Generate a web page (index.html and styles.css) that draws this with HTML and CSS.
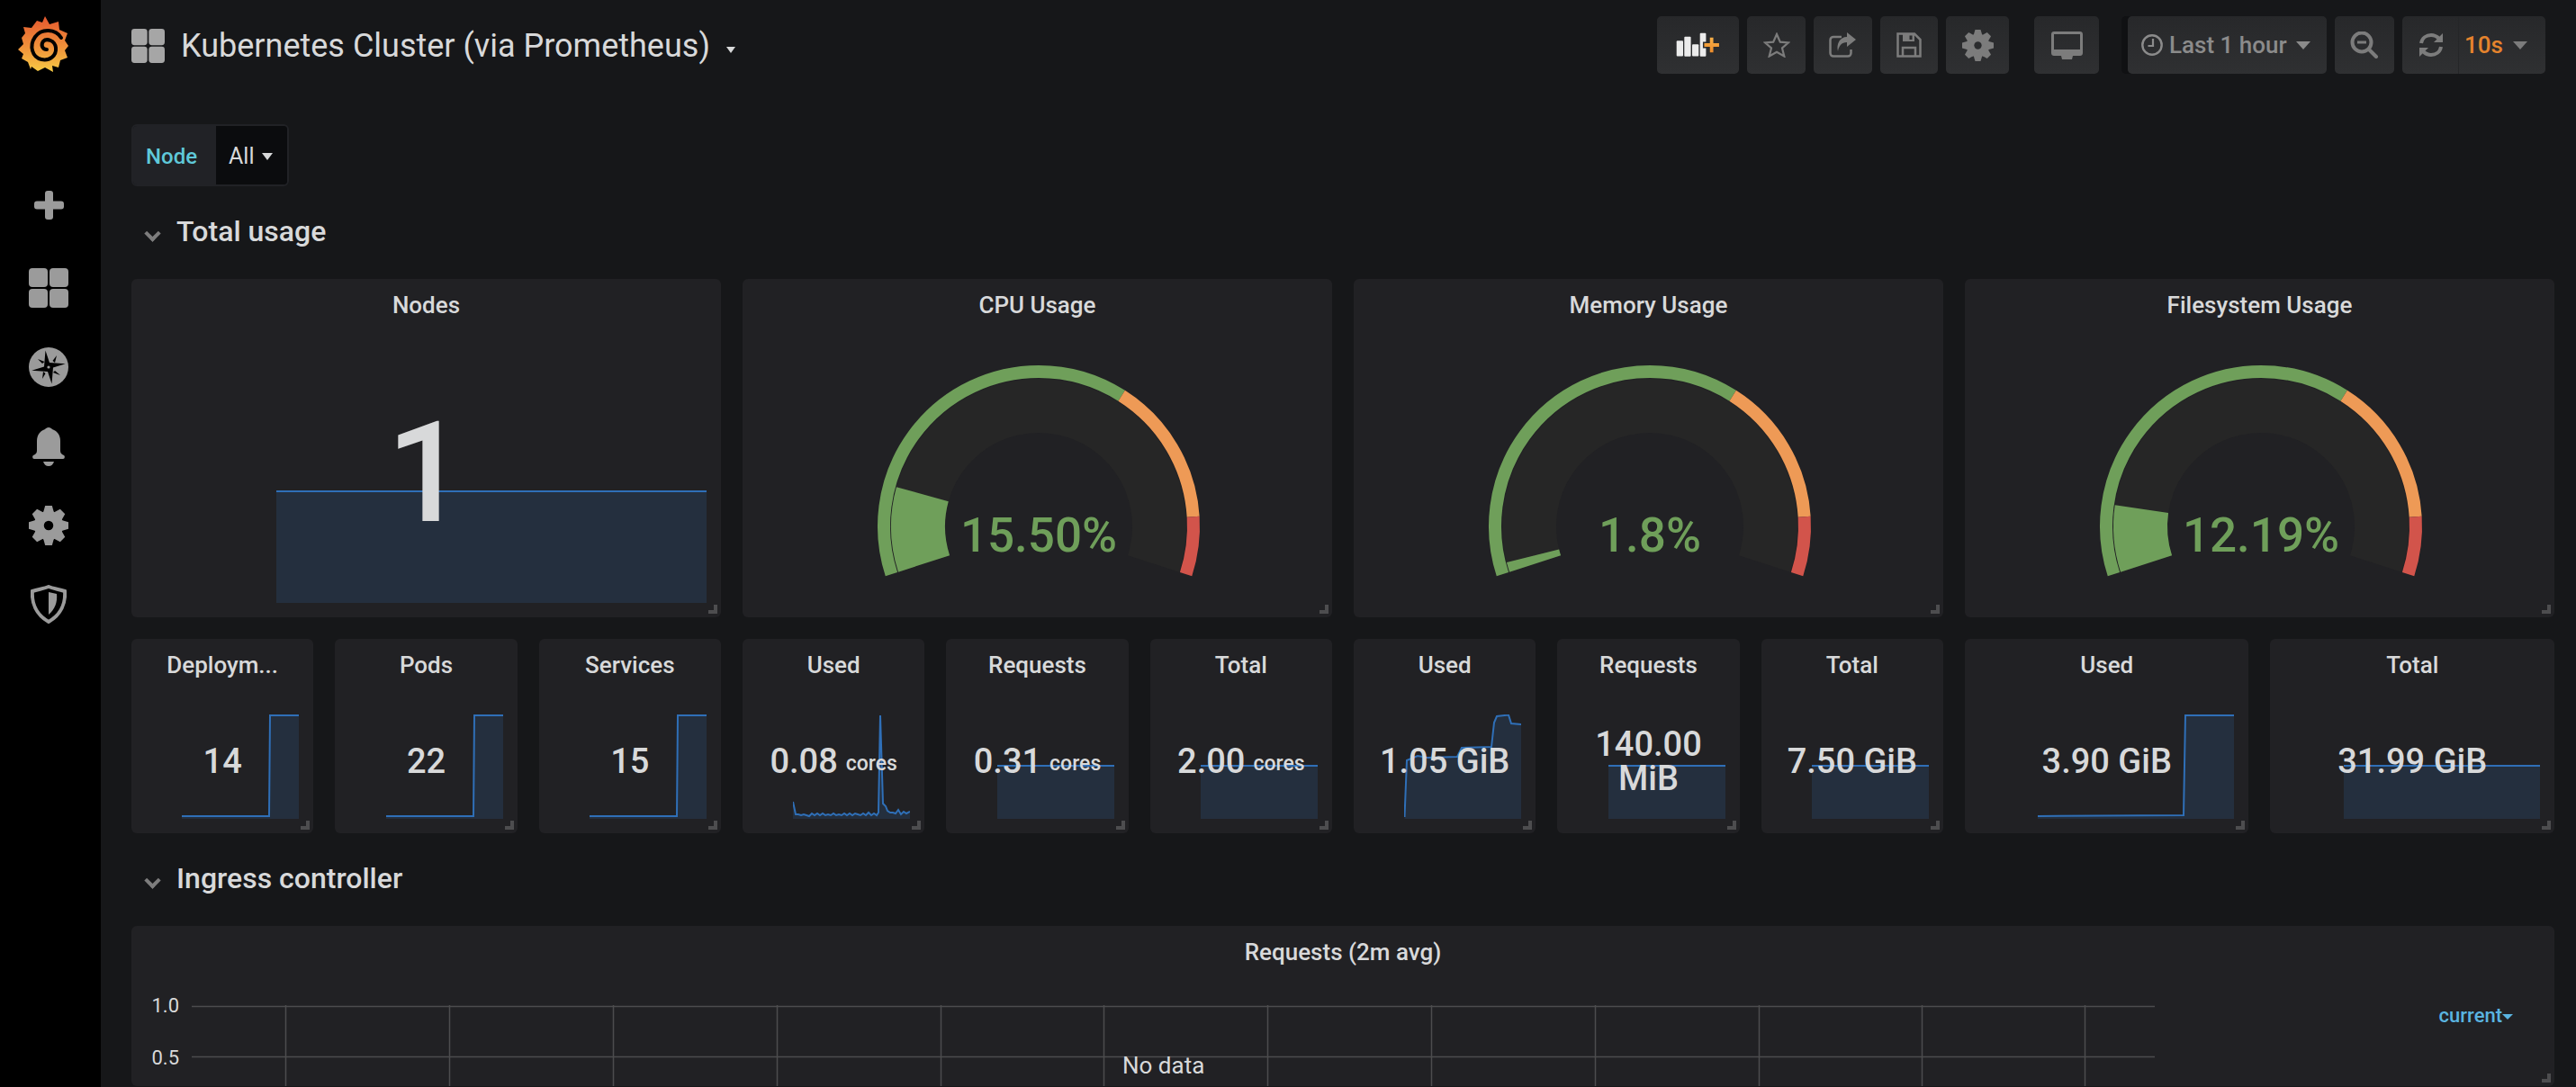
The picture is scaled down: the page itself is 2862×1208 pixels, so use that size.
FILE: index.html
```html
<!DOCTYPE html>
<html lang="en">
<head>
  <meta charset="UTF-8">
  <title>Kubernetes Cluster (via Prometheus) - Grafana</title>
  <link rel="stylesheet" href="styles.css">
</head>
<body>

  <!-- shared icon shapes -->
  <svg class="defs" width="0" height="0">
    <defs>
      <mask id="gear-hole">
        <rect x="-24" y="-24" width="48" height="48" fill="#fff"/>
        <circle r="5.5" fill="#000"/>
      </mask>
      <symbol id="gear" viewBox="-23 -23 46 46">
        <g mask="url(#gear-hole)">
          <circle r="17"/>
          <polygon points="-6,-16 -4,-23 4,-23 6,-16 6,16 4,23 -4,23 -6,16"/>
          <polygon points="-6,-16 -4,-23 4,-23 6,-16 6,16 4,23 -4,23 -6,16" transform="rotate(45)"/>
          <polygon points="-6,-16 -4,-23 4,-23 6,-16 6,16 4,23 -4,23 -6,16" transform="rotate(90)"/>
          <polygon points="-6,-16 -4,-23 4,-23 6,-16 6,16 4,23 -4,23 -6,16" transform="rotate(135)"/>
        </g>
      </symbol>
      <symbol id="tiles" viewBox="0 0 44 44">
        <rect x="0" y="0" width="21" height="21" rx="4"/>
        <rect x="23" y="0" width="21" height="21" rx="4"/>
        <rect x="0" y="23" width="21" height="21" rx="4"/>
        <rect x="23" y="23" width="21" height="21" rx="4"/>
      </symbol>
      <linearGradient id="logo-fill" x1="0" y1="0" x2="0" y2="1">
        <stop offset="0" stop-color="#e4572f"/>
        <stop offset="0.55" stop-color="#f0913a"/>
        <stop offset="1" stop-color="#f7cb45"/>
      </linearGradient>
      <linearGradient id="plus-fill" x1="0" y1="0" x2="0" y2="1">
        <stop offset="0" stop-color="#f8b24a"/>
        <stop offset="1" stop-color="#ec8a2a"/>
      </linearGradient>
    </defs>
  </svg>

  <nav class="sidebar">
    <svg class="logo" viewBox="0 0 56 62" width="56" height="62">
      <path fill="url(#logo-fill)" d="M30 0 L35 9 L45 6 L46 15 L55 19 L52 27 L56 33 L52 38 L55 46 L47 49 L45 57 L38 55 L39 62 L30 57 L22 61 L15 56 L14 59 L11 51 L4 47 L6 42 L0 37 L6 31 L4 24 L8 19 L6 12 L15 13 L21 5 L27 7 Z"/>
      <path fill="none" stroke="#000" stroke-width="4" stroke-linecap="round" d="M48 24 C42 14 26 13 19 23 C12 33 16 46 26 48 C35 50 43 44 42 35 C41 27 32 24 28 28 C25 32 27 37 32 37"/>
    </svg>
    <a class="side-item side-add">
      <svg viewBox="0 0 33 32" width="33" height="32"><rect x="12" y="0" width="9" height="32" rx="3"/><rect x="0" y="11.5" width="33" height="9" rx="3"/></svg>
    </a>
    <a class="side-item side-first">
      <svg width="44" height="44"><use href="#tiles"/></svg>
    </a>
    <a class="side-item">
      <svg viewBox="-22 -22 44 44" width="44" height="44">
        <circle r="22"/>
        <polygon class="cut" points="-3.5,-18.5 1,-5 18.7,-3.7 5,0.5 3.5,18.5 -1,5 -18.7,3.7 -5,-0.5"/>
        <polygon class="cut" points="-12,-9 -4.5,-6 -7,-4"/>
        <polygon class="cut" points="9,-13 7,-5 4.5,-7"/>
        <polygon class="cut" points="13,9 5,6 7,4"/>
        <polygon class="cut" points="-7,13 -6,5 -3.5,7"/>
        <circle r="1.6"/>
      </svg>
    </a>
    <a class="side-item">
      <svg viewBox="0 0 36 43" width="36" height="43">
        <path d="M18 0 C20 0 21 1 22 2 C28 4 31 9 31 15 V26 C31 29 33 30 35 31 C36.500 32 36 35 34 35 H2 C0 35 -.5 32 1 31 C3 30 5 29 5 26 V15 C5 9 8 4 14 2 C15 1 16 0 18 0 Z"/>
        <path d="M12 38 H24 C23 41 21 43 18 43 C15 43 13 41 12 38 Z"/>
      </svg>
    </a>
    <a class="side-item">
      <svg width="44" height="44"><use href="#gear"/></svg>
    </a>
    <a class="side-item">
      <svg viewBox="0 0 40 44" width="40" height="44">
        <path class="line" stroke-width="4" d="M20 2 C25 4 32 5 38 7 C39 20 34 33 20 41 C6 33 1 20 2 7 C8 5 15 4 20 2 Z"/>
        <path d="M20 8 L29 10 C30 19 27 27 20 33 Z"/>
      </svg>
    </a>
  </nav>

  <div class="main">
    <header class="topbar">
      <div class="dash-title">
        <svg class="title-icon" width="37" height="38" preserveAspectRatio="none" viewBox="0 0 44 44"><use href="#tiles" width="44" height="44"/></svg>
        <h1>Kubernetes Cluster (via Prometheus)</h1>
        <span class="caret caret-small"></span>
      </div>
      <div class="actions">
        <button class="btn btn-add">
          <svg viewBox="0 0 50 28" width="50" height="28">
            <rect class="bar" x="0.700" y="9.300" width="7.300" height="17.300" rx="1"/>
            <rect class="bar" x="9.300" y="4.700" width="7.300" height="22" rx="1"/>
            <rect class="bar" x="18" y="13.300" width="7.300" height="13.300" rx="1"/>
            <rect class="bar" x="26.700" y="0.700" width="6.700" height="26" rx="1"/>
            <path class="plus" d="M37 5 H42.300 V11.300 H48.700 V16.700 H42.300 V23 H37 V16.700 H30.700 V11.300 H37 Z"/>
          </svg>
        </button>
        <button class="btn btn-star">
          <svg viewBox="0 0 30 28" width="30" height="28"><polygon class="line" stroke-width="2.200" points="15,2 18.800,10.700 28,11.400 21,17.500 23.300,26.500 15,21.700 6.700,26.500 9,17.500 2,11.400 11.200,10.700"/></svg>
        </button>
        <button class="btn btn-star">
          <svg viewBox="0 0 31 28" width="31" height="28">
            <path class="line" stroke-width="2.500" d="M14 5 H5 C3 5 1.500 6.500 1.500 8.500 V23 C1.500 25 3 26.500 5 26.500 H21 C23 26.500 24.500 25 24.500 23 V19"/>
            <path d="M20 0 L30 8 L20 16 V11 C14 11 11 15 10 21 C8 13 12 5 20 5 Z"/>
          </svg>
        </button>
        <button class="btn btn-save">
          <svg viewBox="0 0 28 28" width="28" height="28">
            <path class="line" stroke-width="2.500" d="M1.500 1.500 H20 L26.500 8 V26.500 H1.500 Z"/>
            <path class="line" stroke-width="2.500" d="M7 26 V17 H21 V26"/>
            <path d="M7 1.500 H20 V10 H7 Z M14.500 3.500 V8 H17.500 V3.500 Z" fill-rule="evenodd"/>
          </svg>
        </button>
        <button class="btn btn-gear">
          <svg width="35" height="35"><use href="#gear"/></svg>
        </button>
        <button class="btn btn-view">
          <svg viewBox="0 0 35 31" width="35" height="31">
            <path fill-rule="evenodd" d="M3 0 H32 C33.700 0 35 1.300 35 3 V24 C35 25.700 33.700 27 32 27 H3 C1.300 27 0 25.700 0 24 V3 C0 1.300 1.300 0 3 0 Z M3 3 V20 H32 V3 Z"/>
            <polygon points="11,27 24,27 23,31 12,31"/>
          </svg>
        </button>
        <button class="btn btn-time">
          <svg viewBox="0 0 24 24" width="24" height="24">
            <circle class="line" cx="12" cy="12" r="10.700" stroke-width="2.400"/>
            <path class="line" stroke-width="2.200" d="M13 5 V13 H7.500"/>
          </svg>
          <span>Last 1 hour</span>
          <span class="caret"></span>
        </button>
        <button class="btn btn-zoom">
          <svg viewBox="0 0 32 30" width="32" height="30">
            <circle class="line" cx="13" cy="12" r="10.500" stroke-width="4"/>
            <rect x="8" y="10.500" width="10" height="3"/>
            <path class="line" stroke-width="4" stroke-linecap="round" d="M21 20 L29 28"/>
          </svg>
        </button>
        <div class="btn btn-refresh">
          <span class="refresh-icon">
            <svg viewBox="0 0 28 28" width="28" height="28">
              <path class="line" stroke-width="4" d="M3 12 C4 6 9 3 14 3 C18 3 21 5 23 7"/>
              <polygon points="27,1 27,11 17,11"/>
              <path class="line" stroke-width="4" d="M25 16 C24 22 19 25 14 25 C10 25 7 23 5 21"/>
              <polygon points="1,27 1,17 11,17"/>
            </svg>
          </span>
          <span class="refresh-rate">10s <span class="caret"></span></span>
        </div>
      </div>
    </header>

    <div class="variable">
      <span class="variable-label">Node</span>
      <span class="variable-value">All <span class="caret"></span></span>
    </div>

    <div class="row-title"><span class="chevron"></span>Total usage</div>

    <section class="panels">
      <article class="panel span-6">
        <h2>Nodes</h2>
        <div class="stat stat-huge">1</div>
        <svg class="spark spark-lg" viewBox="0 0 478 125">
          <path class="spark-fill" d="M0 1 H478 V125 H0 Z"/>
          <path class="spark-line" d="M0 1 H478"/>
        </svg>
      </article>

      <article class="panel span-6">
        <h2>CPU Usage</h2>
        <svg class="gauge" viewBox="-329 -217 656 318">
          <path class="gauge-bg" d="M-127.440 41.410 A134 134 0 1 1 127.440 41.410"/>
          <path class="gauge-value" pathLength="216" stroke-dasharray="33.480 216" d="M-127.440 41.410 A134 134 0 1 1 127.440 41.410"/>
          <path class="ring ring-ok" pathLength="216" stroke-dasharray="140.400 216" d="M-163.580 53.150 A172 172 0 1 1 163.580 53.150"/>
          <path class="ring ring-warn" pathLength="216" stroke-dasharray="0 140.400 54 216" d="M-163.580 53.150 A172 172 0 1 1 163.580 53.150"/>
          <path class="ring ring-crit" pathLength="216" stroke-dasharray="0 194.400 21.600 216" d="M-163.580 53.150 A172 172 0 1 1 163.580 53.150"/>
          <text class="gauge-text" x="0" y="28">15.50%</text>
        </svg>
      </article>

      <article class="panel span-6">
        <h2>Memory Usage</h2>
        <svg class="gauge" viewBox="-329 -217 656 318">
          <path class="gauge-bg" d="M-127.440 41.410 A134 134 0 1 1 127.440 41.410"/>
          <path class="gauge-value" pathLength="216" stroke-dasharray="3.890 216" d="M-127.440 41.410 A134 134 0 1 1 127.440 41.410"/>
          <path class="ring ring-ok" pathLength="216" stroke-dasharray="140.400 216" d="M-163.580 53.150 A172 172 0 1 1 163.580 53.150"/>
          <path class="ring ring-warn" pathLength="216" stroke-dasharray="0 140.400 54 216" d="M-163.580 53.150 A172 172 0 1 1 163.580 53.150"/>
          <path class="ring ring-crit" pathLength="216" stroke-dasharray="0 194.400 21.600 216" d="M-163.580 53.150 A172 172 0 1 1 163.580 53.150"/>
          <text class="gauge-text" x="0" y="28">1.8%</text>
        </svg>
      </article>

      <article class="panel span-6">
        <h2>Filesystem Usage</h2>
        <svg class="gauge" viewBox="-329 -217 656 318">
          <path class="gauge-bg" d="M-127.440 41.410 A134 134 0 1 1 127.440 41.410"/>
          <path class="gauge-value" pathLength="216" stroke-dasharray="26.330 216" d="M-127.440 41.410 A134 134 0 1 1 127.440 41.410"/>
          <path class="ring ring-ok" pathLength="216" stroke-dasharray="140.400 216" d="M-163.580 53.150 A172 172 0 1 1 163.580 53.150"/>
          <path class="ring ring-warn" pathLength="216" stroke-dasharray="0 140.400 54 216" d="M-163.580 53.150 A172 172 0 1 1 163.580 53.150"/>
          <path class="ring ring-crit" pathLength="216" stroke-dasharray="0 194.400 21.600 216" d="M-163.580 53.150 A172 172 0 1 1 163.580 53.150"/>
          <text class="gauge-text" x="0" y="28">12.19%</text>
        </svg>
      </article>

      <article class="panel span-2">
        <h2>Deploym...</h2>
        <div class="stat">14</div>
        <svg class="spark" viewBox="0 0 130 116">
          <path class="spark-fill" d="M0 113 H97 L98 1 H130 V116 H0 Z"/>
          <path class="spark-line" d="M0 113 H97 L98 1 H130"/>
        </svg>
      </article>

      <article class="panel span-2">
        <h2>Pods</h2>
        <div class="stat">22</div>
        <svg class="spark" viewBox="0 0 130 116">
          <path class="spark-fill" d="M0 113 H97 L98 1 H130 V116 H0 Z"/>
          <path class="spark-line" d="M0 113 H97 L98 1 H130"/>
        </svg>
      </article>

      <article class="panel span-2">
        <h2>Services</h2>
        <div class="stat">15</div>
        <svg class="spark" viewBox="0 0 130 116">
          <path class="spark-fill" d="M0 113 H97 L98 1 H130 V116 H0 Z"/>
          <path class="spark-line" d="M0 113 H97 L98 1 H130"/>
        </svg>
      </article>

      <article class="panel span-2">
        <h2>Used</h2>
        <div class="stat">0.08 <small>cores</small></div>
        <svg class="spark" viewBox="0 0 130 116">
          <path class="spark-fill" d="M0 97 L3 111 L6 111 L9 112 L12 111 L15 112 L18 113 L21 110 L24 112 L27 110 L30 112 L33 110 L36 112 L39 111 L42 112 L45 110 L48 112 L51 111 L54 112 L57 110 L60 112 L63 110 L66 112 L69 110 L72 111 L75 112 L78 110 L81 112 L84 109 L87 112 L90 110 L93 112 L95 109 L97 1 L100 99 L103 102 L105 107 L108 109 L111 109 L114 110 L117 106 L120 111 L123 108 L126 110 L130 108 V116 H0 Z"/>
          <path class="spark-line" d="M0 97 L3 111 L6 111 L9 112 L12 111 L15 112 L18 113 L21 110 L24 112 L27 110 L30 112 L33 110 L36 112 L39 111 L42 112 L45 110 L48 112 L51 111 L54 112 L57 110 L60 112 L63 110 L66 112 L69 110 L72 111 L75 112 L78 110 L81 112 L84 109 L87 112 L90 110 L93 112 L95 109 L97 1 L100 99 L103 102 L105 107 L108 109 L111 109 L114 110 L117 106 L120 111 L123 108 L126 110 L130 108"/>
        </svg>
      </article>

      <article class="panel span-2">
        <h2>Requests</h2>
        <div class="stat">0.31 <small>cores</small></div>
        <svg class="spark" viewBox="0 0 130 116">
          <path class="spark-fill" d="M0 57 H130 V116 H0 Z"/>
          <path class="spark-line" d="M0 57 H130"/>
        </svg>
      </article>

      <article class="panel span-2">
        <h2>Total</h2>
        <div class="stat">2.00 <small>cores</small></div>
        <svg class="spark" viewBox="0 0 130 116">
          <path class="spark-fill" d="M0 57 H130 V116 H0 Z"/>
          <path class="spark-line" d="M0 57 H130"/>
        </svg>
      </article>

      <article class="panel span-2">
        <h2>Used</h2>
        <div class="stat">1.05 GiB</div>
        <svg class="spark" viewBox="0 0 130 116">
          <path class="spark-fill" d="M0.500 114 L3 51 L15 46 L26 48 L59 47 L64 37 L97 36 L100 9 L103 2 L116 0.500 L119 10 L130 11 V116 H0.500 Z"/>
          <path class="spark-line" d="M0.500 114 L3 51 L15 46 L26 48 L59 47 L64 37 L97 36 L100 9 L103 2 L116 0.500 L119 10 L130 11"/>
        </svg>
      </article>

      <article class="panel span-2">
        <h2>Requests</h2>
        <div class="stat">140.00 MiB</div>
        <svg class="spark" viewBox="0 0 130 116">
          <path class="spark-fill" d="M0 57 H130 V116 H0 Z"/>
          <path class="spark-line" d="M0 57 H130"/>
        </svg>
      </article>

      <article class="panel span-2">
        <h2>Total</h2>
        <div class="stat">7.50 GiB</div>
        <svg class="spark" viewBox="0 0 130 116">
          <path class="spark-fill" d="M0 57 H130 V116 H0 Z"/>
          <path class="spark-line" d="M0 57 H130"/>
        </svg>
      </article>

      <article class="panel span-3">
        <h2>Used</h2>
        <div class="stat">3.90 GiB</div>
        <svg class="spark spark-wide" viewBox="0 0 218 116">
          <path class="spark-fill" d="M0 113 L162 112 L164 1 H218 V116 H0 Z"/>
          <path class="spark-line" d="M0 113 L162 112 L164 1 H218"/>
        </svg>
      </article>

      <article class="panel span-3">
        <h2>Total</h2>
        <div class="stat">31.99 GiB</div>
        <svg class="spark spark-wide" viewBox="0 0 218 116">
          <path class="spark-fill" d="M0 57 H218 V116 H0 Z"/>
          <path class="spark-line" d="M0 57 H218"/>
        </svg>
      </article>
    </section>

    <div class="row-title"><span class="chevron"></span>Ingress controller</div>

    <article class="panel graph-panel">
      <h2>Requests (2m avg)</h2>
      <div class="graph">
        <div class="y-axis">
          <span>1.0</span>
          <span>0.5</span>
        </div>
        <div class="plot">
          <svg width="2181" height="90">
            <g class="grid">
              <path d="M0 1.500 H2181 M0 57.500 H2181" stroke-width="2"/>
              <path d="M104.500 0 V90 M286.500 0 V90 M468.500 0 V90 M650.500 0 V90 M832.500 0 V90 M1013.500 0 V90 M1195.500 0 V90 M1377.500 0 V90 M1559.500 0 V90 M1741.500 0 V90 M1922.500 0 V90 M2103.500 0 V90"/>
            </g>
          </svg>
          <span class="no-data">No data</span>
        </div>
        <div class="legend">current<span class="caret caret-tiny"></span></div>
      </div>
    </article>
  </div>

</body>
</html>
```

FILE: styles.css
```css
/* Base */
html, body {
  height: 1208px;
  overflow: hidden;
}

body {
  display: flex;
  margin: 0;
  background-color: #161719;
  color: #d8d9da;
  font-family: Roboto, "Liberation Sans", sans-serif;
}

.defs {
  position: absolute;
}

svg {
  display: block;
}

.line {
  fill: none;
  stroke: currentColor;
}

.caret {
  display: inline-block;
  border-top: 9px solid currentColor;
  border-left: 8.500px solid transparent;
  border-right: 8.500px solid transparent;
}

.caret-small {
  border-top-width: 7px;
  border-left-width: 5.500px;
  border-right-width: 5.500px;
}

.caret-tiny {
  border-top-width: 6px;
  border-left-width: 6px;
  border-right-width: 6px;
  margin-bottom: 3px;
}

/* Sidebar */
.sidebar {
  display: flex;
  flex-direction: column;
  align-items: center;
  flex: none;
  box-sizing: border-box;
  width: 112px;
  padding-right: 4px;
  background-color: #000;
  color: #9b9b9b;
  fill: #9b9b9b;
}

.logo {
  margin: 18px 0 0 -12px;
}

.side-item {
  display: flex;
  align-items: center;
  justify-content: center;
  height: 88px;
}

.side-add {
  margin-top: 104px;
}

.side-first {
  margin-top: 4px;
}

.sidebar .cut {
  fill: #000;
}

/* Top bar */
.main {
  flex: 1;
  min-width: 0;
  height: 1208px;
  padding: 0 24px 0 34px;
  overflow: hidden;
}

.topbar {
  display: flex;
  align-items: center;
  justify-content: space-between;
  height: 64px;
  padding: 18px 10px 18px 0;
}

.dash-title {
  display: flex;
  align-items: center;
}

.title-icon {
  fill: #a6a6a6;
  margin-top: 2px;
}

.dash-title h1 {
  margin: 2px 18px 0 18px;
  font-size: 36px;
  font-weight: 400;
  line-height: 44px;
}

.dash-title .caret {
  margin-top: 10px;
}

.actions {
  display: flex;
  gap: 9px;
}

.btn {
  display: flex;
  align-items: center;
  justify-content: center;
  box-sizing: border-box;
  height: 64px;
  padding: 0;
  border: 0;
  border-radius: 5px;
  background: linear-gradient(#27282a, #2f3032);
  color: #7c7c7c;
  fill: #7c7c7c;
  font: 500 26px Roboto, sans-serif;
}

.btn-add {
  width: 91px;
}

.btn-add .bar {
  fill: #ececec;
}

.btn-add .plus {
  fill: url(#plus-fill);
  stroke: #2b2c2e;
  stroke-width: 1.500;
}

.btn-star {
  width: 65px;
}

.btn-save {
  width: 64px;
}

.btn-gear {
  width: 70px;
}

.btn-view {
  width: 72px;
  margin-left: 19px;
}

.btn-time {
  justify-content: flex-start;
  gap: 7px;
  width: 221px;
  margin-left: 23px;
  padding-left: 15px;
  color: #8b8b8b;
  box-shadow: -7px 0 0 #101113;
}

.btn-time .caret {
  margin-left: 3px;
}

.btn-zoom {
  width: 66px;
}

.btn-refresh {
  width: 159px;
  justify-content: flex-start;
}

.refresh-icon {
  display: flex;
  justify-content: center;
  box-sizing: border-box;
  width: 62px;
  padding-left: 2px;
}

.refresh-rate {
  display: flex;
  align-items: center;
  gap: 11px;
  height: 100%;
  padding-left: 6px;
  border-left: 1px solid #252628;
  color: #e5832d;
}

.refresh-rate .caret {
  color: #7c7c7c;
}

/* Template variable */
.variable {
  display: flex;
  box-sizing: border-box;
  width: 175px;
  height: 69px;
  margin-top: 38px;
  border: 2px solid #212226;
  border-radius: 6px;
  overflow: hidden;
}

.variable-label {
  display: flex;
  align-items: center;
  box-sizing: border-box;
  width: 92px;
  padding: 2px 0 0 14px;
  background-color: #212226;
  color: #5fc9d9;
  font-size: 24px;
  font-weight: 500;
}

.variable-value {
  display: flex;
  align-items: center;
  flex: 1;
  gap: 9px;
  padding: 2px 0 0 14px;
  background-color: #0b0c0e;
  font-size: 25px;
}

.variable-value .caret {
  border-top-width: 8px;
  border-left-width: 6.500px;
  border-right-width: 6.500px;
  color: #d8d9da;
}

/* Row headers */
.row-title {
  display: flex;
  align-items: center;
  box-sizing: border-box;
  height: 103px;
  padding: 30px 0 33px 15px;
  font-size: 32px;
  font-weight: 500;
}

.chevron {
  width: 9px;
  height: 9px;
  margin: 5px 20px 0 2px;
  border-right: 4px solid #7d7d7d;
  border-bottom: 4px solid #7d7d7d;
  transform: rotate(45deg);
}

/* Panels */
.panels {
  display: grid;
  grid-template-columns: repeat(24, 1fr);
  gap: 24px;
  width: 2692px;
}

.panel {
  position: relative;
  display: flex;
  flex-direction: column;
  min-width: 0;
  border-radius: 6px;
  background-color: #212124;
}

.panel::after {
  content: "";
  position: absolute;
  right: 4px;
  bottom: 4px;
  width: 6px;
  height: 6px;
  border-right: 4px solid #4d4d4f;
  border-bottom: 4px solid #4d4d4f;
}

.panel h2 {
  flex: none;
  margin: 0;
  font-size: 26px;
  font-weight: 500;
  line-height: 58px;
  text-align: center;
}

.span-6 {
  grid-column: span 6;
  height: 376px;
}

.span-3 {
  grid-column: span 3;
  height: 216px;
}

.span-2 {
  grid-column: span 2;
  height: 216px;
}

/* Single stat */
.stat {
  position: relative;
  z-index: 1;
  display: flex;
  flex: 1;
  flex-wrap: wrap;
  align-items: center;
  align-content: center;
  justify-content: center;
  gap: 0 9px;
  padding: 0 16px 2px;
  font-size: 38px;
  font-weight: 500;
  line-height: 38px;
  text-align: center;
}

.stat small {
  align-self: flex-end;
  font-size: 23px;
  font-weight: 500;
  line-height: 32px;
}

.stat-huge {
  font-size: 155px;
  line-height: 1;
}

.spark {
  position: absolute;
  right: 16px;
  bottom: 16px;
  width: 130px;
  height: 116px;
}

.spark-wide {
  width: 218px;
}

.spark-lg {
  width: 478px;
  height: 125px;
}

.spark-fill {
  fill: #242f3e;
}

.spark-line {
  fill: none;
  stroke: #2f6fb7;
  stroke-width: 2;
}

/* Gauges */
.gauge {
  width: 656px;
  height: 318px;
}

.gauge-bg {
  fill: none;
  stroke: #262626;
  stroke-width: 60;
}

.gauge-value {
  fill: none;
  stroke: #6f9f5a;
  stroke-width: 60;
}

.ring {
  fill: none;
  stroke-width: 14;
}

.ring-ok {
  stroke: #6f9f5a;
}

.ring-warn {
  stroke: #ee9a56;
}

.ring-crit {
  stroke: #d2544b;
}

.gauge-text {
  fill: #6f9f5a;
  font-size: 53px;
  font-weight: 500;
  text-anchor: middle;
}

/* Graph panel */
.graph-panel {
  width: 2692px;
  height: 178px;
}

.graph {
  display: flex;
  padding-top: 30px;
}

.y-axis {
  flex: none;
  width: 53px;
  height: 60px;
  margin: -28px 14px 0 0;
  font-size: 22px;
  line-height: 58px;
  text-align: right;
}

.y-axis span {
  display: block;
}

.plot {
  position: relative;
  flex: none;
  width: 2181px;
}

.grid path {
  fill: none;
  stroke: #4c4c4e;
  stroke-width: 1.500;
}

.no-data {
  position: absolute;
  left: 1034px;
  top: 52px;
  font-size: 26px;
  line-height: 30px;
}

.legend {
  margin: -1px 46px 0 auto;
  color: #5ab4e0;
  font-size: 22px;
  font-weight: 500;
  line-height: 26px;
}
```
